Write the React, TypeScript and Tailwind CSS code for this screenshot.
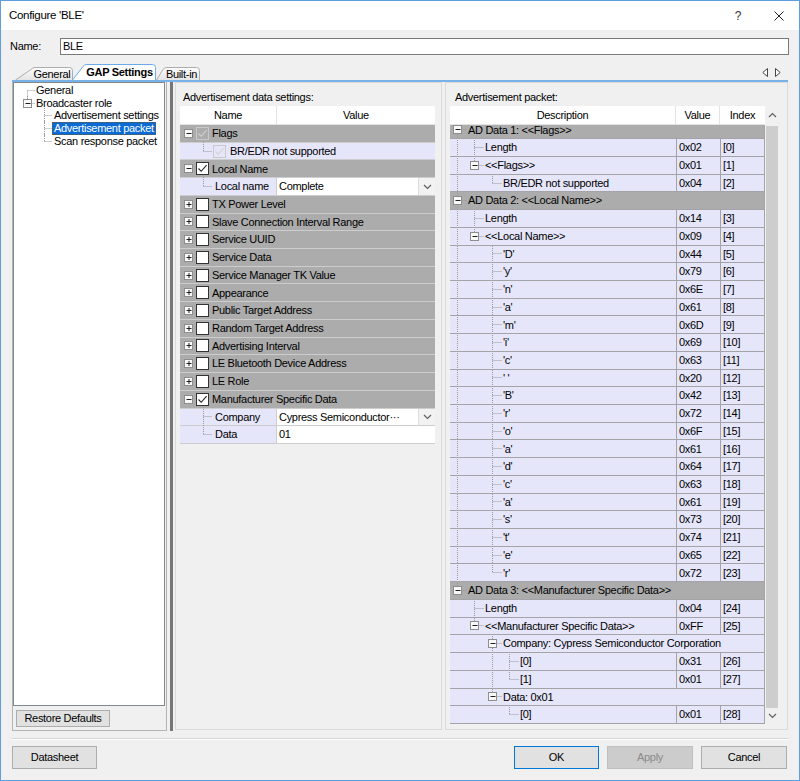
import React from 'react';

type CheckState = 'on' | 'off' | 'dis';

const DOT = { stroke: '#9a9a9a', strokeDasharray: '1 1' } as const;

function Expander({ cx, cy, open = true }: { cx: number; cy: number; open?: boolean }) {
  return (
    <g>
      <rect x={cx - 4} y={cy - 4} width={8} height={8} fill="#f8f8f8" stroke="#8e8e8e" />
      <line x1={cx - 2} y1={cy} x2={cx + 3} y2={cy} stroke="#1e1e1e" />
      {!open && <line x1={cx + 0.5} y1={cy - 2.5} x2={cx + 0.5} y2={cy + 2.5} stroke="#1e1e1e" />}
    </g>
  );
}

function CheckBox({ state }: { state: CheckState }) {
  const dis = state === 'dis';
  return (
    <span
      className={`flex h-[13px] w-[13px] shrink-0 items-center justify-center border ${
        dis ? 'border-[#c9c9c9]' : 'border-[#333333] bg-white'
      }`}
    >
      {state !== 'off' && (
        <svg width="11" height="11" viewBox="0 0 11 11">
          <path d="M1.5 5.5 L4.2 8.3 L9.6 2.2" fill="none" stroke={dis ? '#d2d2d2' : '#222222'} strokeWidth="1.1" />
        </svg>
      )}
    </span>
  );
}

function Chevron({ up = false }: { up?: boolean }) {
  return (
    <svg width="9" height="6" viewBox="0 0 9 6">
      <path d={up ? 'M1 5 L4.5 1.5 L8 5' : 'M1 1 L4.5 4.5 L8 1'} fill="none" stroke="#606060" strokeWidth="1.2" />
    </svg>
  );
}

/* ---------- left navigation tree ---------- */

type NavRow = { label: string; depth: number; first?: boolean; last?: boolean; exp?: boolean; selected?: boolean };

const NAV: NavRow[] = [
  { label: 'General', depth: 0, first: true },
  { label: 'Broadcaster role', depth: 0, last: true, exp: true },
  { label: 'Advertisement settings', depth: 1 },
  { label: 'Advertisement packet', depth: 1, selected: true },
  { label: 'Scan response packet', depth: 1, last: true },
];

function NavTree() {
  return (
    <div className="flex flex-col pt-[1px]">
      {NAV.map((r) => {
        const x = r.depth === 0 ? 13.5 : 30.5;
        const w = r.depth === 0 ? 22 : 38;
        return (
          <div key={r.label} className="flex h-[12.75px] items-center">
            <svg width={w} height={13} className="shrink-0 overflow-visible">
              <line x1={x} y1={r.first ? 6.5 : -1} x2={x} y2={r.last ? 6.5 : 14} {...DOT} />
              <line x1={x} y1={6.5} x2={x + 8} y2={6.5} {...DOT} />
              {r.exp && <Expander cx={x} cy={6.5} />}
            </svg>
            <span
              className={`leading-[11px] ${
                r.selected
                  ? 'border border-dotted border-[#6b5a30] bg-[#0a6bd6] px-[1px] text-white'
                  : r.depth === 1
                  ? 'px-[2px]'
                  : ''
              }`}
            >
              {r.label}
            </span>
          </div>
        );
      })}
    </div>
  );
}

/* ---------- advertisement data settings ---------- */

type SRow =
  | { kind: 'cat'; label: string; open: boolean; check: CheckState }
  | { kind: 'sub'; label: string; check?: CheckState; value?: string; drop?: boolean; last?: boolean };

const COLLAPSED = [
  'TX Power Level',
  'Slave Connection Interval Range',
  'Service UUID',
  'Service Data',
  'Service Manager TK Value',
  'Appearance',
  'Public Target Address',
  'Random Target Address',
  'Advertising Interval',
  'LE Bluetooth Device Address',
  'LE Role',
];

const SETTINGS: SRow[] = [
  { kind: 'cat', label: 'Flags', open: true, check: 'dis' },
  { kind: 'sub', label: 'BR/EDR not supported', check: 'dis', last: true },
  { kind: 'cat', label: 'Local Name', open: true, check: 'on' },
  { kind: 'sub', label: 'Local name', value: 'Complete', drop: true, last: true },
  ...COLLAPSED.map((label): SRow => ({ kind: 'cat', label, open: false, check: 'off' })),
  { kind: 'cat', label: 'Manufacturer Specific Data', open: true, check: 'on' },
  { kind: 'sub', label: 'Company', value: 'Cypress Semiconductor\u00b7\u00b7\u00b7', drop: true },
  { kind: 'sub', label: 'Data', value: '01', last: true },
];

function SubLine({ width, last }: { width: number; last?: boolean }) {
  return (
    <svg width={width} height={17} className="shrink-0 overflow-visible">
      <line x1={23.5} y1={-1} x2={23.5} y2={last ? 8.5 : 18} {...DOT} />
      <line x1={23.5} y1={8.5} x2={32} y2={8.5} {...DOT} />
    </svg>
  );
}

function SettingsRow({ row }: { row: SRow }) {
  if (row.kind === 'cat') {
    return (
      <div className="flex h-[17.72px] items-center border-b border-[#cdcdcd] bg-[#acacac]">
        <svg width={16} height={17} className="shrink-0">
          <Expander cx={8.5} cy={8.5} open={row.open} />
        </svg>
        <CheckBox state={row.check} />
        <span className="ml-[3px]">{row.label}</span>
      </div>
    );
  }
  if (row.check) {
    return (
      <div className="flex h-[17.72px] items-center border-b border-[#cdcdcd] bg-[#e6e6fa]">
        <SubLine width={33} last={row.last} />
        <CheckBox state={row.check} />
        <span className="ml-[4px]">{row.label}</span>
      </div>
    );
  }
  return (
    <div className="flex h-[17.72px] border-b border-[#cdcdcd]">
      <div className="flex w-[97px] shrink-0 items-center border-r border-[#cdcdcd] bg-[#e6e6fa]">
        <SubLine width={35} last={row.last} />
        <span>{row.label}</span>
      </div>
      <div className="flex min-w-0 flex-1 items-center bg-white pl-[2px]">{row.value}</div>
      {row.drop && (
        <div className="flex w-[17px] shrink-0 items-center justify-center border-l border-[#dcdcdc] bg-[#f2f2f2]">
          <Chevron />
        </div>
      )}
    </div>
  );
}

/* ---------- advertisement packet ---------- */

type PRow = {
  kind: 'cat' | 'leaf' | 'grp';
  d: number;
  t: string;
  v?: string;
  i?: string;
  g: boolean[];
  first?: boolean;
  last?: boolean;
  exp?: boolean;
};

const NAME = 'Dynamic Broadcaster'.split('');

const PACKET: PRow[] = [
  { kind: 'cat', d: 0, t: 'AD Data 1: <<Flags>>', g: [], exp: true, first: true },
  { kind: 'leaf', d: 1, t: 'Length', v: '0x02', i: '[0]', g: [true] },
  { kind: 'leaf', d: 1, t: '<<Flags>>', v: '0x01', i: '[1]', g: [true], last: true, exp: true },
  { kind: 'leaf', d: 2, t: 'BR/EDR not supported', v: '0x04', i: '[2]', g: [true, false], last: true },
  { kind: 'cat', d: 0, t: 'AD Data 2: <<Local Name>>', g: [], exp: true },
  { kind: 'leaf', d: 1, t: 'Length', v: '0x14', i: '[3]', g: [true] },
  { kind: 'leaf', d: 1, t: '<<Local Name>>', v: '0x09', i: '[4]', g: [true], last: true, exp: true },
  ...NAME.map(
    (c, k): PRow => ({
      kind: 'leaf',
      d: 2,
      t: `'${c}'`,
      v: '0x' + c.charCodeAt(0).toString(16).toUpperCase(),
      i: `[${k + 5}]`,
      g: [true, false],
      last: k === NAME.length - 1,
    })
  ),
  { kind: 'cat', d: 0, t: 'AD Data 3: <<Manufacturer Specific Data>>', g: [], exp: true, last: true },
  { kind: 'leaf', d: 1, t: 'Length', v: '0x04', i: '[24]', g: [false] },
  { kind: 'leaf', d: 1, t: '<<Manufacturer Specific Data>>', v: '0xFF', i: '[25]', g: [false], last: true, exp: true },
  { kind: 'grp', d: 2, t: 'Company: Cypress Semiconductor Corporation', g: [false, false], exp: true },
  { kind: 'leaf', d: 3, t: '[0]', v: '0x31', i: '[26]', g: [false, false, true] },
  { kind: 'leaf', d: 3, t: '[1]', v: '0x01', i: '[27]', g: [false, false, true], last: true },
  { kind: 'grp', d: 2, t: 'Data: 0x01', g: [false, false], exp: true, last: true },
  { kind: 'leaf', d: 3, t: '[0]', v: '0x01', i: '[28]', g: [false, false, false], last: true },
];

const levelX = (l: number) => Math.round(7 + l * 17.3) + 0.5;

function TreeCell({ row }: { row: PRow }) {
  const x = levelX(row.d);
  return (
    <svg width={Math.round(7 + row.d * 17.3) + 11} height={17} className="shrink-0 overflow-visible">
      {row.g.map((on, l) => (on ? <line key={l} x1={levelX(l)} y1={-1} x2={levelX(l)} y2={18} {...DOT} /> : null))}
      <line x1={x} y1={row.first ? 8.5 : -1} x2={x} y2={row.last ? 8.5 : 18} {...DOT} />
      <line x1={x} y1={8.5} x2={x + 10} y2={8.5} {...DOT} />
      {row.exp && <Expander cx={x} cy={8.5} />}
    </svg>
  );
}

function PacketRow({ row }: { row: PRow }) {
  const leaf = row.kind === 'leaf';
  return (
    <div
      className={`flex h-[17.72px] border-b border-[#a3a3a8] ${row.kind === 'cat' ? 'bg-[#acacac]' : 'bg-[#e6e6fa]'}`}
    >
      <div className={`flex items-center overflow-hidden whitespace-nowrap ${leaf ? 'w-[226px] shrink-0' : 'flex-1'}`}>
        <TreeCell row={row} />
        <span>{row.t}</span>
      </div>
      {leaf && (
        <>
          <div className="flex w-[44px] shrink-0 items-center border-l border-[#a3a3a8] pl-[2px]">{row.v}</div>
          <div className="flex w-[45px] shrink-0 items-center border-l border-[#a3a3a8] pl-[2px]">{row.i}</div>
        </>
      )}
    </div>
  );
}

/* ---------- chrome ---------- */

function Tab({
  label,
  active,
  slant,
  w,
  h,
  className,
  textClass,
}: {
  label: string;
  active?: boolean;
  slant: number;
  w: number;
  h: number;
  className: string;
  textClass: string;
}) {
  const d = `M0.5 ${h} L${slant} 2.5 Q${slant + 1.5} 0.5 ${slant + 4} 0.5 L${w - 3.5} 0.5 Q${w - 0.5} 0.5 ${w - 0.5} 3.5 L${w - 0.5} ${h}`;
  return (
    <div className={`grid shrink-0 ${className}`}>
      <svg width={w} height={h} className="col-start-1 row-start-1">
        <defs>
          <linearGradient id="tabfill" x1="0" y1="0" x2="0" y2="1">
            <stop offset="0" stopColor="#fdfdfd" />
            <stop offset="1" stopColor="#e4e4e4" />
          </linearGradient>
        </defs>
        <path d={d} fill={active ? '#ffffff' : 'url(#tabfill)'} stroke={active ? '#6aaae6' : '#acacac'} />
      </svg>
      <span className={`col-start-1 row-start-1 self-center text-center leading-[12px] ${textClass}`}>{label}</span>
    </div>
  );
}

function Button({ label, className }: { label: string; className: string }) {
  return <div className={`flex shrink-0 items-center justify-center border ${className}`}>{label}</div>;
}

export default function App() {
  return (
    <div className="flex h-[781px] w-[800px] flex-col overflow-hidden border border-[#5d9fdc] bg-[#f0f0f0] font-['Liberation_Sans',Arial,sans-serif] text-[11px] tracking-[-0.3px] text-black">
      {/* title bar */}
      <div className="flex h-[29px] shrink-0 items-center bg-white pl-[8px]">
        <span className="text-[11.5px]">Configure 'BLE'</span>
        <span className="ml-auto text-[12px] text-[#333]">?</span>
        <svg width="10" height="10" viewBox="0 0 10 10" className="ml-[33px] mr-[15px]">
          <path d="M0.5 0.5 L9.5 9.5 M9.5 0.5 L0.5 9.5" stroke="#222" strokeWidth="1" />
        </svg>
      </div>

      {/* name */}
      <div className="mt-[8px] flex h-[17px] shrink-0 items-center pl-[9px] pr-[10px]">
        <span className="w-[50px]">Name:</span>
        <div className="flex h-[17px] flex-1 items-center border border-[#7a7a7a] bg-white pl-[2px]">BLE</div>
      </div>

      {/* tabs */}
      <div className="mt-[8px] flex h-[17px] shrink-0 items-end pl-[14px] pr-[18px]">
        <Tab label="General" slant={16} w={58} h={13} className="h-[13px] w-[58px]" textClass="pl-[16px]" />
        <Tab
          label="GAP Settings"
          active
          slant={11}
          w={84}
          h={16}
          className="-ml-[1px] h-[16px] w-[84px]"
          textClass="pl-[11px] font-bold"
        />
        <Tab label="Built-in" slant={7} w={44} h={13} className="h-[13px] w-[44px]" textClass="pl-[7px]" />
        <div className="mb-[3px] ml-auto flex items-center gap-[7px]">
          <svg width="6" height="9" viewBox="0 0 6 9">
            <path d="M5.5 0.5 L0.8 4.5 L5.5 8.5 Z" fill="#fff" stroke="#444" />
          </svg>
          <svg width="6" height="9" viewBox="0 0 6 9">
            <path d="M0.5 0.5 L5.2 4.5 L0.5 8.5 Z" fill="#fff" stroke="#444" />
          </svg>
        </div>
      </div>

      {/* tab page */}
      <div className="mx-[11px] flex h-[651px] shrink-0 border-t-2 border-[#78b2e8]">
        {/* left navigation */}
        <div className="flex w-[155px] shrink-0 flex-col border-x border-b border-[#b4b4b4]">
          <div className="h-[624px] w-[152px] border border-[#828790] bg-white">
            <NavTree />
          </div>
          <Button label="Restore Defaults" className="ml-[3px] mt-[4px] h-[17px] w-[94px] border-[#adadad] bg-[#e1e1e1]" />
        </div>

        {/* splitter */}
        <div className="flex w-[8px] shrink-0 pl-[3px]">
          <div className="h-[649px] w-[3px] bg-[#767676]" />
        </div>

        {/* advertisement data settings */}
        <div className="flex h-[648px] w-[267px] shrink-0 flex-col border border-[#dadada] pl-[4px] pt-[7px]">
          <div className="ml-[3px] h-[16px] leading-[14px]">Advertisement data settings:</div>
          <div className="w-[255px]">
            <div className="flex h-[19px] border-b border-[#e3e3e3] bg-white">
              <div className="flex w-[97px] items-center justify-center border-r border-[#e3e3e3]">Name</div>
              <div className="flex flex-1 items-center justify-center">Value</div>
            </div>
            {SETTINGS.map((r, k) => (
              <SettingsRow key={k} row={r} />
            ))}
          </div>
        </div>

        <div className="w-[3px] shrink-0" />

        {/* advertisement packet */}
        <div className="flex h-[648px] flex-1 flex-col border border-[#dadada] pl-[4px] pt-[7px]">
          <div className="ml-[5px] h-[16px] leading-[14px]">Advertisement packet:</div>
          <div className="flex">
            <div className="w-[315px] shrink-0">
              <div className="flex h-[19px] border-b border-[#e3e3e3] bg-white">
                <div className="flex w-[226px] items-center justify-center border-r border-[#e3e3e3]">Description</div>
                <div className="flex w-[44px] items-center justify-center border-r border-[#e3e3e3]">Value</div>
                <div className="flex w-[45px] items-center justify-center">Index</div>
              </div>
              <div className="h-[599px] overflow-hidden border-r border-[#a3a3a8]">
                <div className="-mt-[3.5px]">
                  {PACKET.map((r, k) => (
                    <PacketRow key={k} row={r} />
                  ))}
                </div>
              </div>
            </div>
            <div className="flex h-[618px] w-[14px] shrink-0 flex-col items-center bg-[#f0f0f0]">
              <div className="flex h-[18px] items-center">
                <Chevron up />
              </div>
              <div className="mt-[2px] h-[582px] w-[12px] bg-[#cdcdcd]" />
              <div className="flex flex-1 items-center">
                <Chevron />
              </div>
            </div>
          </div>
        </div>
      </div>

      {/* separator */}
      <div className="mx-[11px] mt-[7px] h-[2px] shrink-0 border-t border-b border-t-[#d5d5d5] border-b-white" />

      {/* buttons */}
      <div className="mt-[6px] flex h-[23px] shrink-0 pl-[11px] pr-[12px]">
        <Button label="Datasheet" className="w-[85px] border-[#adadad] bg-[#e1e1e1]" />
        <div className="ml-auto flex gap-[8px]">
          <Button label="OK" className="w-[85px] border-[#0078d7] bg-[#e1e1e1]" />
          <Button label="Apply" className="w-[86px] border-[#bfbfbf] bg-[#cccccc] text-[#8a8a8a]" />
          <Button label="Cancel" className="w-[86px] border-[#adadad] bg-[#e1e1e1]" />
        </div>
      </div>
    </div>
  );
}
